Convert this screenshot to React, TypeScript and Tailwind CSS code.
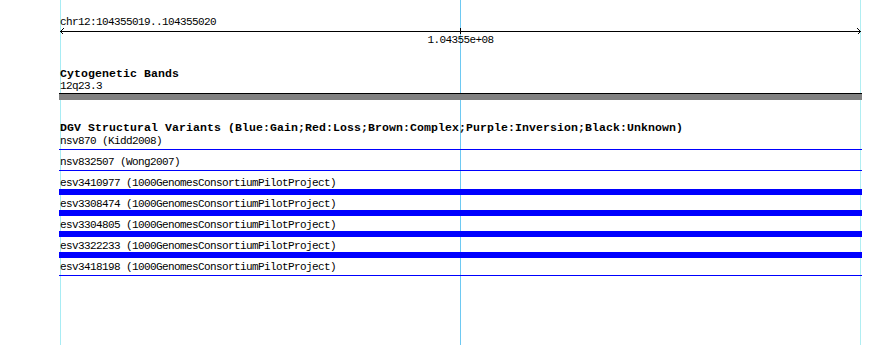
const FONT = "font-['Liberation_Mono','DejaVu_Sans_Mono',monospace]";

// rows of the DGV track: label + whether the feature is drawn as a thick bar
const VARIANTS = [
    { id: "nsv870", source: "Kidd2008", thick: false },
    { id: "nsv832507", source: "Wong2007", thick: false },
    { id: "esv3410977", source: "1000GenomesConsortiumPilotProject", thick: true },
    { id: "esv3308474", source: "1000GenomesConsortiumPilotProject", thick: true },
    { id: "esv3304805", source: "1000GenomesConsortiumPilotProject", thick: true },
    { id: "esv3322233", source: "1000GenomesConsortiumPilotProject", thick: true },
    { id: "esv3418198", source: "1000GenomesConsortiumPilotProject", thick: false },
];

function Ruler() {
    return (
        <svg width="803" height="7" viewBox="0 0 803 7" shapeRendering="crispEdges" className="block">
            <line x1="1" y1="4.5" x2="802" y2="4.5" stroke="#000" strokeWidth="1" />
            <polyline points="4.5,1.5 1.5,4.5 4.5,7.5" fill="none" stroke="#000" strokeWidth="1" />
            <polyline points="798.5,1.5 801.5,4.5 798.5,7.5" fill="none" stroke="#000" strokeWidth="1" />
            <line x1="401.5" y1="1" x2="401.5" y2="7" stroke="#000" strokeWidth="1" />
        </svg>
    );
}

export default function App() {
    return (
        <div className={`relative w-[890px] h-[345px] bg-white overflow-hidden text-black ${FONT}`}>
            {/* guide lines behind the tracks */}
            <div className="absolute top-0 bottom-0 left-[60px] w-px bg-[#a8ecf4]" />
            <div className="absolute top-0 bottom-0 left-[460px] w-px bg-[#6ec9f2]" />
            <div className="absolute top-0 bottom-0 left-[860px] w-px bg-[#b0eef2]" />

            <div className="relative ml-[59px] w-[803px] flex flex-col">
                {/* ruler */}
                <div className="mt-[16px] h-[11px] leading-[13px] text-[11px] tracking-[-0.6px] pl-px whitespace-nowrap">
                    chr12:104355019..104355020
                </div>
                <Ruler />
                <div className="h-[13px] leading-[13px] text-[11px] tracking-[-0.6px] text-center whitespace-nowrap">1.04355e+08</div>

                {/* cytogenetic bands */}
                <div className="mt-[20px] h-[12px] leading-[14px] text-[11.5px] font-bold tracking-[0.1px] pl-px whitespace-nowrap">
                    Cytogenetic Bands
                </div>
                <div className="h-[14px] leading-[14px] text-[11px] tracking-[-0.6px] pl-px">12q23.3</div>
                <div className="h-[7px] border-t border-black bg-[#818181]" />

                {/* DGV */}
                <div className="mt-[21px] h-[12px] leading-[14px] text-[11.5px] font-bold tracking-[0.1px] pl-px whitespace-nowrap">
                    DGV Structural Variants (Blue:Gain;Red:Loss;Brown:Complex;Purple:Inversion;Black:Unknown)
                </div>
                {VARIANTS.map((v) => (
                    <div key={v.id} className="h-[21px] flex flex-col">
                        <div className="h-[14px] leading-[16px] text-[11px] tracking-[-0.6px] pl-px whitespace-nowrap">
                            {v.id} ({v.source})
                        </div>
                        {v.thick ? (
                            <div className="h-[6px] bg-[#0000ff]" />
                        ) : (
                            <div className="h-[6px]">
                                <div className="mt-[2px] h-px bg-[#0000ff]" />
                            </div>
                        )}
                    </div>
                ))}
            </div>
        </div>
    );
}
